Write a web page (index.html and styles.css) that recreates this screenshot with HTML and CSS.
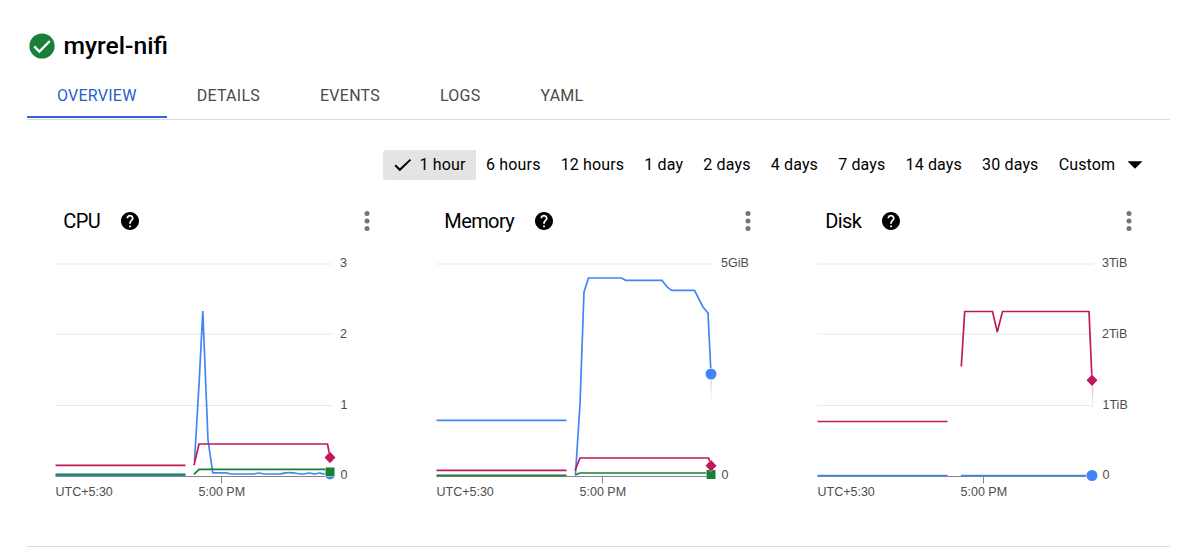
FILE: index.html
```html
<!DOCTYPE html>
<html lang="en">
<head>
<meta charset="utf-8">
<title>myrel-nifi</title>
<link rel="stylesheet" href="styles.css">
</head>
<body>
<main class="page">
  <header class="title">
    <svg class="status" width="26" height="26" viewBox="0 0 26 26"><circle cx="13" cy="13" r="12.6" fill="#188038"/><path d="M5.2 13.4l5.2 5.2L20.800 8" fill="none" stroke="#fff" stroke-width="2.300"/></svg>
    <h1>myrel-nifi</h1>
  </header>
  <nav class="tabs">
    <a class="tab active">OVERVIEW</a>
    <a class="tab">DETAILS</a>
    <a class="tab">EVENTS</a>
    <a class="tab">LOGS</a>
    <a class="tab">YAML</a>
  </nav>
  <div class="ranges">
    <span class="range selected"><svg width="18" height="14" viewBox="0 0 18 14"><path d="M1.200 7.200l4.600 4.600L16.500 1.600" fill="none" stroke="#000" stroke-width="2"/></svg>1 hour</span>
    <span class="range">6 hours</span>
    <span class="range">12 hours</span>
    <span class="range">1 day</span>
    <span class="range">2 days</span>
    <span class="range">4 days</span>
    <span class="range">7 days</span>
    <span class="range">14 days</span>
    <span class="range">30 days</span>
    <span class="range">Custom</span>
    <svg class="caret" width="16" height="8" viewBox="0 0 16 8"><path d="M0.500 0.300h15L8 7.800z"/></svg>
  </div>
  <section class="charts">
    <article class="card">
      <div class="card-head">
        <h2>CPU</h2>
        <svg class="help" width="18" height="18" viewBox="2 2 20 20"><path d="M12 2C6.480 2 2 6.480 2 12s4.480 10 10 10 10-4.480 10-10S17.520 2 12 2zm1 17h-2v-2h2v2zm2.070-7.750l-.9.920C13.450 12.900 13 13.500 13 15h-2v-.5c0-1.100.45-2.100 1.170-2.830l1.240-1.260c.37-.36.59-.86.59-1.410 0-1.100-.9-2-2-2s-2 .9-2 2H8c0-2.210 1.790-4 4-4s4 1.790 4 4c0 .88-.36 1.680-.93 2.250z"/></svg>
        <svg class="more" width="6" height="20" viewBox="0 0 6 20"><circle cx="3" cy="2.500" r="2.500"/><circle cx="3" cy="10" r="2.500"/><circle cx="3" cy="17.500" r="2.500"/></svg>
      </div>
      <svg class="plot" width="381" height="260" viewBox="27 246 381 260">
        <path class="grid" d="M55.500 264H331.500M55.500 334H331.500M55.500 405.500H331.500"/>
        <path class="axis" d="M55.500 476.500H331M221.500 476.500v7"/>
        <path class="line blue" d="M55.500 475.500H185.500M194.500 461L199 385 202.800 311 208 440 212.800 472.800H226C229 473 229 474 232 474H252C256 474 256 473 259 473S262 474 266 474H278C284 474 282 472.700 289 472.700S298 474 302 474 306 473 309 473 312 474 315 474 317 473 319 473 322 474.500 330 474.500"/>
        <path class="line green" d="M55.500 474.300H185.500M194 474.300L199 469.300H330"/>
        <path class="line pink" d="M55.500 465.300H185.500M194 465.300L199 444H327.500L330 457"/>
        <circle class="dot" cx="330" cy="474.500" r="5"/>
        <path class="square" d="M325.500 467.500h9v9h-9z"/>
        <path class="diamond" d="M330 451.800l5.500 5.700-5.500 5.700-5.500-5.700z"/>
        <text x="340" y="267">3</text><text x="340" y="338">2</text><text x="340.500" y="409">1</text><text x="340.500" y="479">0</text>
        <text x="55.500" y="495.500">UTC+5:30</text><text x="198.500" y="495.500">5:00 PM</text>
      </svg>
    </article>
    <article class="card">
      <div class="card-head">
        <h2>Memory</h2>
        <svg class="help" width="18" height="18" viewBox="2 2 20 20"><path d="M12 2C6.480 2 2 6.480 2 12s4.480 10 10 10 10-4.480 10-10S17.520 2 12 2zm1 17h-2v-2h2v2zm2.070-7.750l-.9.920C13.450 12.900 13 13.500 13 15h-2v-.5c0-1.100.45-2.100 1.170-2.830l1.240-1.260c.37-.36.59-.86.59-1.410 0-1.100-.9-2-2-2s-2 .9-2 2H8c0-2.210 1.790-4 4-4s4 1.790 4 4c0 .88-.36 1.680-.93 2.250z"/></svg>
        <svg class="more" width="6" height="20" viewBox="0 0 6 20"><circle cx="3" cy="2.500" r="2.500"/><circle cx="3" cy="10" r="2.500"/><circle cx="3" cy="17.500" r="2.500"/></svg>
      </div>
      <svg class="plot" width="381" height="260" viewBox="408 246 381 260">
        <defs><linearGradient id="fade-blue" x1="0" y1="0" x2="0" y2="1"><stop offset="0" stop-color="#4285f4" stop-opacity=".3"/><stop offset="1" stop-color="#4285f4" stop-opacity="0"/></linearGradient></defs>
        <path class="grid" d="M436.500 264H712"/>
        <path class="axis" d="M436.500 476.500H712M602.500 476.500v7"/>
        <path class="line blue" d="M436.500 420.300H566.500M575.500 474L580 404 584 292 588.500 278H621.500L625.500 280.300H662C665 284 667 288 671.500 290.300H694.500L703 307 708 313 711 374"/>
        <path fill="url(#fade-blue)" d="M710.500 380h1.400v24h-1z"/>
        <path class="line green" d="M436.500 475.300H566.500M575 475L580 473H711"/>
        <path class="line pink" d="M436.500 470.300H566.500M575 470.500L580 458H708.500L711 465"/>
        <circle class="dot" cx="711" cy="374" r="5.500"/>
        <path class="square" d="M706.500 470h9v9h-9z"/>
        <path class="diamond" d="M711 460l5.500 5.700-5.500 5.700-5.500-5.700z"/>
        <text x="721" y="267">5GiB</text><text x="721.500" y="479">0</text>
        <text x="436.500" y="495.500">UTC+5:30</text><text x="579.500" y="495.500">5:00 PM</text>
      </svg>
    </article>
    <article class="card">
      <div class="card-head">
        <h2>Disk</h2>
        <svg class="help" width="18" height="18" viewBox="2 2 20 20"><path d="M12 2C6.480 2 2 6.480 2 12s4.480 10 10 10 10-4.480 10-10S17.520 2 12 2zm1 17h-2v-2h2v2zm2.070-7.750l-.9.920C13.450 12.900 13 13.500 13 15h-2v-.5c0-1.100.45-2.100 1.170-2.830l1.240-1.260c.37-.36.59-.86.59-1.410 0-1.100-.9-2-2-2s-2 .9-2 2H8c0-2.210 1.790-4 4-4s4 1.790 4 4c0 .88-.36 1.680-.93 2.250z"/></svg>
        <svg class="more" width="6" height="20" viewBox="0 0 6 20"><circle cx="3" cy="2.500" r="2.500"/><circle cx="3" cy="10" r="2.500"/><circle cx="3" cy="17.500" r="2.500"/></svg>
      </div>
      <svg class="plot" width="381" height="260" viewBox="789 246 381 260">
        <defs><linearGradient id="fade-pink" x1="0" y1="0" x2="0" y2="1"><stop offset="0" stop-color="#c2185b" stop-opacity=".3"/><stop offset="1" stop-color="#c2185b" stop-opacity="0"/></linearGradient></defs>
        <path class="grid" d="M817.500 264H1093M817.500 334H1093M817.500 405.500H1093"/>
        <path class="axis" d="M817.500 476.500H1093M983.500 476.500v7"/>
        <path class="line blue" d="M817.500 475.500H947.500M961 475.500H1092"/>
        <path class="line pink" d="M817.500 421.500H947.500M961.300 366.500L964.700 311.500H992.500L997.300 332 1002.500 311.500H1089L1092 380"/>
        <path fill="url(#fade-pink)" d="M1091.700 386h1.400v27h-.8z"/>
        <circle class="dot" cx="1092" cy="475.500" r="5.500"/>
        <path class="diamond" d="M1092 374.600l5.500 5.700-5.500 5.700-5.500-5.700z"/>
        <text x="1102" y="267">3TiB</text><text x="1102" y="338">2TiB</text><text x="1102.500" y="409">1TiB</text><text x="1102.500" y="479">0</text>
        <text x="817.500" y="495.500">UTC+5:30</text><text x="960.500" y="495.500">5:00 PM</text>
      </svg>
    </article>
  </section>
</main>
</body>
</html>
```
FILE: styles.css
```css
* { box-sizing: border-box; }
body { margin: 0; background: #fff; color: #000; font-family: Roboto, sans-serif; }
.page { width: 1143px; height: 547px; margin-left: 27px; padding-top: 30px; border-bottom: 1px solid #dadce0; }
.title { display: flex; align-items: center; height: 32px; padding-left: 2px; gap: 8.500px; }
.title h1 { margin: 0; font-size: 24.700px; line-height: 32px; font-weight: 500; }
.tabs { display: flex; height: 58px; border-bottom: 1px solid #dadce0; }
.tab { height: 56px; padding: 22px 30px 0; font-size: 16px; line-height: 24px; letter-spacing: .25px; color: #4a4a4a; }
.tab.active { color: #2a5cd0; border-bottom: 2px solid #3367d6; }
.ranges { display: flex; align-items: center; height: 30px; margin-top: 30px; padding-left: 356px; font-size: 16px; letter-spacing: .15px; }
.range { padding: 0 10.050px; line-height: 30px; white-space: nowrap; }
.selected { display: flex; align-items: center; gap: 7.500px; padding: 0 10.500px 0 11px; background: #e4e4e4; border-radius: 3px 0 0 3px; }
.caret { margin-left: 2px; }
.charts { display: grid; grid-template-columns: repeat(3, 381px); margin-top: 20px; }
.card-head { display: flex; align-items: center; height: 42px; padding: 0 38.500px 0 36.300px; }
.card-head h2 { margin: 0; font-size: 20px; line-height: 28px; font-weight: 400; letter-spacing: -.6px; }
.help { margin-left: 21px; }
.more { margin-left: auto; fill: #757575; }
.plot { display: block; margin-top: 4px; }
.plot text { font-family: "Liberation Sans", Arial, sans-serif; font-size: 12.500px; fill: #4d4d4d; }
.grid { stroke: #e8e8e8; fill: none; }
.axis { stroke: #80868b; fill: none; }
.line { fill: none; stroke-width: 1.700; }
.blue { stroke: #4285f4; }
.green { stroke: #188038; }
.pink { stroke: #c2185b; }
.dot, .square, .diamond { stroke: #fff; stroke-width: 1; paint-order: stroke; }
.dot { fill: #4285f4; }
.square { fill: #188038; }
.diamond { fill: #c2185b; }
```
